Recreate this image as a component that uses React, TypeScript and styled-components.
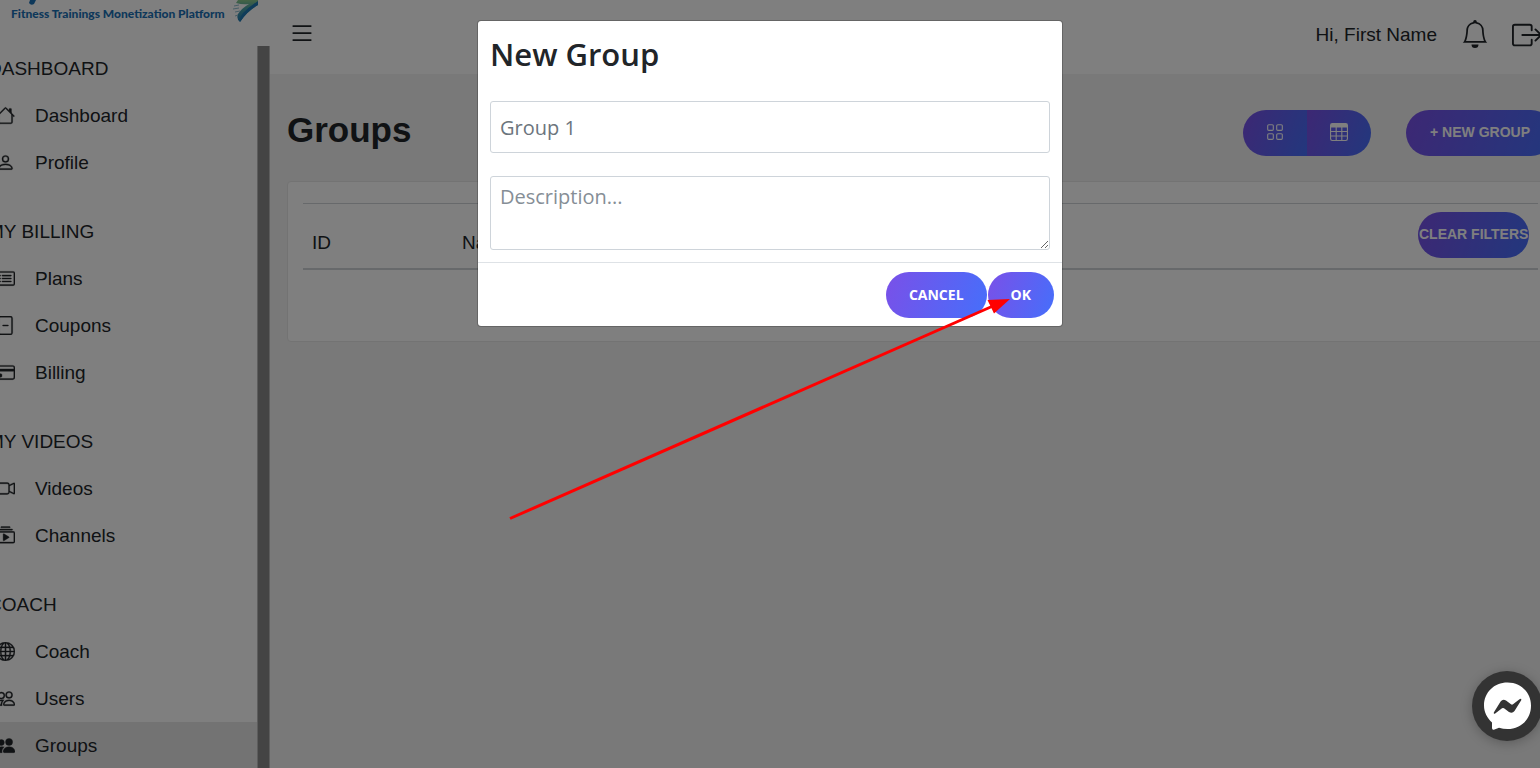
import React, { useState } from "react";
import styled, { createGlobalStyle, css } from "styled-components";
import {
  BsBell,
  BsBoxArrowRight,
  BsCameraVideo,
  BsCardList,
  BsCollectionPlay,
  BsCreditCard,
  BsFileMinus,
  BsGlobe,
  BsGrid,
  BsList,
  BsPeople,
  BsPeopleFill,
  BsPerson,
  BsTable,
} from "react-icons/bs";

const GlobalStyle = createGlobalStyle`
  *, *::before, *::after { box-sizing: border-box; }
  body {
    margin: 0;
    color: #212529;
    font: 19px/28px "Liberation Sans", Arial, sans-serif;
  }
  button, input, textarea { font: inherit; margin: 0; }
`;

const Page = styled.div`
  position: relative;
  height: 100vh;
  overflow: hidden;
`;

const Shell = styled.div`
  display: flex;
  height: 100%;
  margin: 0 -14px 0 -28px;
  background: #f2f2f2;
`;

const Sidebar = styled.aside`
  display: flex;
  flex-direction: column;
  flex: 0 0 298px;
  background: #fff;
`;

const Logo = styled.a`
  display: flex;
  align-items: flex-start;
  flex: 0 0 46px;
  padding-left: 39px;
  text-decoration: none;
`;

const LogoText = styled.span`
  padding-top: 4px;
  font: 900 12px/20px Lato, sans-serif;
  color: #1b70b5;
  white-space: nowrap;
`;

const LogoMark = styled.svg`
  position: absolute;
  top: 0;
  left: 0;
`;

const Scroller = styled.div`
  display: flex;
  flex: 1;
  min-height: 0;
  overflow: hidden;
`;

const Nav = styled.nav`
  flex: 1;
`;

const ScrollBar = styled.div`
  flex: 0 0 13px;
  background: #888;
  border: solid #bbb;
  border-width: 0 1px;
`;

const NavGroup = styled.section`
  margin-bottom: 23px;
`;

const NavTitle = styled.h2`
  margin: 0;
  padding-left: 16px;
  font-size: 19px;
  font-weight: normal;
  line-height: 46px;
`;

const NavLink = styled.a<{ $active?: boolean }>`
  display: flex;
  align-items: center;
  gap: 20px;
  height: 47px;
  padding-left: 24px;
  color: inherit;
  text-decoration: none;
  background: ${(p) => (p.$active ? "#e6e6e6" : "transparent")};

  svg { stroke-width: 0.3px; }
`;

const Main = styled.main`
  flex: 1;
  min-width: 0;
`;

const TopBar = styled.header`
  display: flex;
  align-items: center;
  height: 74px;
  padding: 0 12px 4px 18px;
  background: #fff;
`;

const IconButton = styled.button`
  display: flex;
  padding: 0;
  border: 0;
  background: none;
  color: #212529;
`;

const MenuButton = styled(IconButton)`
  padding-bottom: 4px;
`;

const UserName = styled.span`
  margin-left: auto;
`;

const TopActions = styled.div`
  display: flex;
  gap: 23px;
  margin-left: 24px;
`;

const Content = styled.div`
  padding: 36px 0 0 17px;
`;

const TitleRow = styled.div`
  display: flex;
  align-items: flex-start;
  margin-bottom: 25px;
`;

const Title = styled.h1`
  flex: 1;
  margin: 0;
  font-size: 35px;
  line-height: 40px;
`;

const gradient = css`
  border: 0;
  color: #fff;
  background: linear-gradient(110deg, #7a50e8, #456ffb);
`;

const PillButton = styled.button<{ $pad?: number; $modal?: boolean }>`
  ${gradient}
  height: 46px;
  padding: 0 ${(p) => p.$pad ?? 24}px 2px;
  border-radius: 23px;
  font-size: 14px;
  font-weight: bold;
  line-height: 20px;
  white-space: nowrap;
  ${(p) => p.$modal && css`
    padding-bottom: 0;
    font-family: "Open Sans", sans-serif;
  `}
`;

const Toggle = styled.div`
  display: flex;
  margin-right: 35px;
  border-radius: 23px;
  overflow: hidden;
`;

const ToggleButton = styled.button`
  ${gradient}
  display: flex;
  align-items: center;
  justify-content: center;
  width: 64px;
  height: 46px;
  padding: 0 0 2px;
`;

const Card = styled.div`
  height: 161px;
  padding: 21px 15px 0;
  background: #fff;
  border: 1px solid #e6e6e6;
  border-radius: 4px;
`;

const Table = styled.table`
  width: 100%;
  border-collapse: collapse;
  table-layout: fixed;

  th {
    height: 65px;
    padding: 8px 9px 9px;
    border-top: 1px solid #cfd2d6;
    border-bottom: 2px solid #cfd2d6;
    font-weight: normal;
    text-align: left;
    vertical-align: bottom;
  }
  th:first-child { width: 150px; }
  th:last-child { width: 129px; vertical-align: top; }
  button { display: block; }
`;

const HeadLabel = styled.span`
  display: block;
  line-height: 32px;
`;

const Backdrop = styled.div`
  position: absolute;
  inset: 0;
  display: flex;
  align-items: flex-start;
  justify-content: center;
  padding-top: 20px;
  background: rgba(0, 0, 0, 0.5);
`;

const Dialog = styled.form`
  width: 100%;
  max-width: 586px;
  border: 1px solid rgba(0, 0, 0, 0.2);
  border-radius: 4px;
  background: #fff;
  background-clip: padding-box;
  font-family: "Open Sans", sans-serif;
`;

const DialogBody = styled.div`
  display: flex;
  flex-direction: column;
  padding: 12px;
`;

const DialogTitle = styled.h2`
  margin: 0 0 26px;
  font-size: 31px;
  font-weight: 600;
  line-height: 42px;
`;

const field = css`
  width: 100%;
  padding: 6px 9px;
  border: 1px solid #ced4da;
  border-radius: 3px;
  color: #6c757d;
  font-size: 20px;
  line-height: 28px;
  outline: 0;
`;

const NameInput = styled.input`
  ${field}
  height: 52px;
  margin-bottom: 23px;
`;

const DescriptionBox = styled.textarea`
  ${field}
  height: 74px;
  resize: vertical;
  &::placeholder { color: #868e96; }
`;

const DialogFooter = styled.div`
  display: flex;
  justify-content: flex-end;
  gap: 1px;
  padding: 9px 8px 8px;
  border-top: 1px solid #dee2e6;
`;

const Pointer = styled.svg`
  position: absolute;
  top: 0;
  left: calc(50% - 270px);
  pointer-events: none;
`;

const ChatButton = styled.button`
  position: absolute;
  right: -2px;
  bottom: 27px;
  width: 70px;
  height: 70px;
  padding: 0;
  border: 0;
  border-radius: 50%;
  background: #333;
  box-shadow: 0 2px 12px rgba(0, 0, 0, 0.25);
`;

type Icon = (props: { size?: number }) => React.ReactNode;

const HouseIcon: Icon = ({ size = 16 }) => (
  <svg width={size} height={size} viewBox="0 0 16 16" fill="currentColor" stroke="currentColor" aria-hidden="true">
    <path d="M2 13.5V7h1v6.5a.5.5 0 0 0 .5.5h9a.5.5 0 0 0 .5-.5V7h1v6.5a1.5 1.5 0 0 1-1.5 1.5h-9A1.5 1.5 0 0 1 2 13.5zm11-11V6l-2-2V2.500a.5.5 0 0 1 .5-.5h1a.5.5 0 0 1 .5.5z" />
    <path d="M7.293 1.5a1 1 0 0 1 1.414 0l6.647 6.646a.5.5 0 0 1-.708.708L8 2.207 1.354 8.854a.5.5 0 1 1-.708-.708L7.293 1.5z" />
  </svg>
);

const groups: { title: string; items: [string, Icon][] }[] = [
  { title: "DASHBOARD", items: [["Dashboard", HouseIcon], ["Profile", BsPerson]] },
  { title: "MY BILLING", items: [["Plans", BsCardList], ["Coupons", BsFileMinus], ["Billing", BsCreditCard]] },
  { title: "MY VIDEOS", items: [["Videos", BsCameraVideo], ["Channels", BsCollectionPlay]] },
  { title: "COACH", items: [["Coach", BsGlobe], ["Users", BsPeople], ["Groups", BsPeopleFill]] },
];

export default function App() {
  const [name, setName] = useState("Group 1");
  const [description, setDescription] = useState("");

  return (
    <Page>
      <GlobalStyle />
      <Shell>
        <Sidebar>
          <Logo href="#">
            <LogoText>Fitness Trainings Monetization Platform</LogoText>
            <LogoMark width="264" height="26" viewBox="0 0 264 26" aria-hidden="true">
              <defs>
                <linearGradient id="swoosh" x1="0" y1="0" x2="0" y2="1">
                  <stop offset="0" stopColor="#8cc98a" />
                  <stop offset="0.35" stopColor="#4fa5a5" />
                  <stop offset="1" stopColor="#1f78b4" />
                </linearGradient>
              </defs>
              <path d="M30 0H36L34 4Q31 6 29 3Z" fill="#1b70b5" />
              <path d="M238 0H258V5Q247 11 240 22Q236 19 238 14Q242 8 249 4Q243 5 236 3Z" fill="url(#swoosh)" />
              <path d="M258 1V5Q247 11 240 22Q239 18 243 13Q249 7 258 1Z" fill="#1f78b4" />
              <path d="M234 6l5-1M233 9l6-1M235 12l5-1M235 16l3-1" stroke="#8fbccc" strokeWidth="1" />
            </LogoMark>
          </Logo>
          <Scroller>
            <Nav aria-label="Main">
              {groups.map((g) => (
                <NavGroup key={g.title}>
                  <NavTitle>{g.title}</NavTitle>
                  {g.items.map(([label, ItemIcon]) => (
                    <NavLink key={label} href="#" $active={label === "Groups"}>
                      <ItemIcon size={19} />
                      {label}
                    </NavLink>
                  ))}
                </NavGroup>
              ))}
            </Nav>
            <ScrollBar />
          </Scroller>
        </Sidebar>

        <Main>
          <TopBar>
            <MenuButton type="button" aria-label="Toggle menu">
              <BsList size={28} />
            </MenuButton>
            <UserName>Hi, First Name</UserName>
            <TopActions>
              <IconButton type="button" aria-label="Notifications">
                <BsBell size={28} />
              </IconButton>
              <IconButton type="button" aria-label="Log out">
                <BsBoxArrowRight size={30} />
              </IconButton>
            </TopActions>
          </TopBar>
          <Content>
            <TitleRow>
              <Title>Groups</Title>
              <Toggle>
                <ToggleButton type="button" aria-label="Grid view">
                  <BsGrid size={18} />
                </ToggleButton>
                <ToggleButton type="button" aria-label="Table view">
                  <BsTable size={18} />
                </ToggleButton>
              </Toggle>
              <PillButton type="button">+ NEW GROUP</PillButton>
            </TitleRow>
            <Card>
              <Table>
                <thead>
                  <tr>
                    <th scope="col"><HeadLabel>ID</HeadLabel></th>
                    <th scope="col"><HeadLabel>Name</HeadLabel></th>
                    <th scope="col">
                      <PillButton type="button" $pad={1}>CLEAR FILTERS</PillButton>
                    </th>
                  </tr>
                </thead>
              </Table>
            </Card>
          </Content>
        </Main>
      </Shell>

      <Backdrop>
        <Dialog role="dialog" aria-labelledby="dialog-title" onSubmit={(e) => e.preventDefault()}>
          <DialogBody>
            <DialogTitle id="dialog-title">New Group</DialogTitle>
            <NameInput aria-label="Name" value={name} onChange={(e) => setName(e.target.value)} />
            <DescriptionBox
              aria-label="Description"
              placeholder="Description..."
              value={description}
              onChange={(e) => setDescription(e.target.value)}
            />
          </DialogBody>
          <DialogFooter>
            <PillButton type="button" $pad={23} $modal>CANCEL</PillButton>
            <PillButton type="submit" $pad={23} $modal>OK</PillButton>
          </DialogFooter>
        </Dialog>
      </Backdrop>

      <Pointer width="520" height="530" viewBox="500 0 520 530" aria-hidden="true">
        <path d="M510 518.5L993 306" stroke="#f00" strokeWidth="3" />
        <path d="M1010 299L987.500 300L994 313.500Z" fill="#f00" />
      </Pointer>

      <ChatButton type="button" aria-label="Open chat">
        <svg width="70" height="70" viewBox="0 0 70 70" aria-hidden="true">
          <path
            d="M35.500 11.500C22 11.500 12 21.500 12 34.500C12 41 15 47 20 51.500V57Q20 59.500 22.500 58.500L27 56.700Q31 58 35.500 58C49 58 59 48 59 34.700C59 21.500 49 11.500 35.500 11.500Z"
            fill="#fff"
          />
          <path
            d="M21.800 41.500L28.600 30.500Q30.800 27.500 34 29.500L39 33.300Q40 34 41 33.300L47.500 28.300Q49.800 27 49.200 29.200L42.500 40Q40.200 43 37 41L32 37.200Q31 36.600 30 37.200L23.500 42.200Q21.500 43.500 21.800 41.500Z"
            fill="#333"
          />
        </svg>
      </ChatButton>
    </Page>
  );
}
